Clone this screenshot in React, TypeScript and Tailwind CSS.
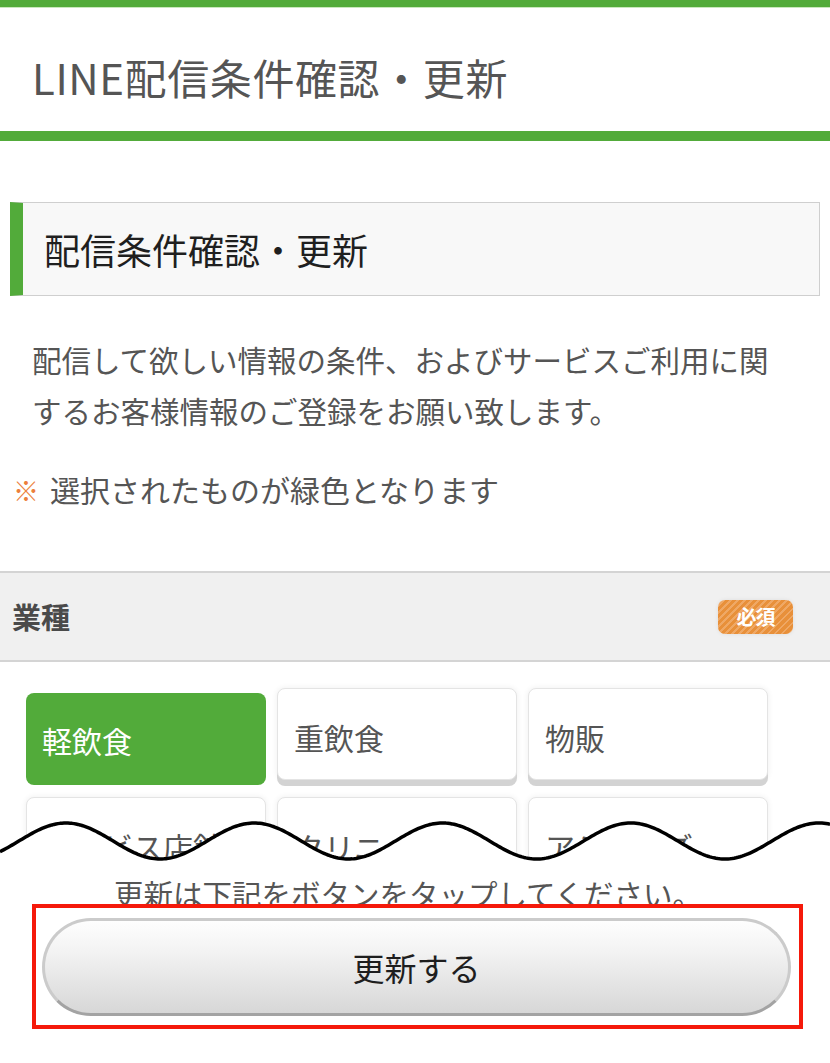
import React from "react";

const wavePath = (() => {
  const pts: string[] = [];
  for (let x = 0; x <= 830; x += 2) {
    const y = 26 - 18 * Math.cos((2 * Math.PI * (x - 66)) / 188.25);
    pts.push(`${x},${y.toFixed(2)}`);
  }
  return pts;
})();

const Card = ({ label, active }: { label: React.ReactNode; active?: boolean }) =>
  active ? (
    <div className="h-[92px] translate-y-[5px] rounded-[8px] bg-[#52ab3a] flex items-center pl-[16px] pt-[2px] text-[30px] text-white overflow-hidden whitespace-nowrap">
      {label}
    </div>
  ) : (
    <div className="h-[92px] rounded-[8px] bg-white border border-[#e4e4e4] shadow-[0_6px_0_#d3d3d3,0_0_6px_rgba(0,0,0,0.07)] flex items-start pl-[16px] pt-[28px] text-[30px] leading-[40px] text-[#555] overflow-hidden">
      <span>{label}</span>
    </div>
  );

export default function App() {
  return (
    <div className="relative w-[830px] h-[1063px] overflow-hidden bg-white font-['Noto_Sans_CJK_JP','Noto_Sans',sans-serif]">
      <div className="h-[8px] bg-[#52ab3a] border-b border-[#c9e8bd]" />
      <div className="h-[123px] flex items-center pl-[32px] pt-[14px] text-[42px] text-[#555] tracking-[0.6px]">
        LINE配信条件確認・更新
      </div>
      <div className="h-[10px] bg-[#52ab3a]" />

      <div className="mt-[61px] mx-[10px] h-[94px] border border-[#cfcfcf] border-l-[13px] border-l-[#52ab3a] bg-[#f8f8f8] flex items-center pl-[21px] text-[36px] text-[#1f1f1f]">
        配信条件確認・更新
      </div>

      <p className="mt-[38px] px-[32px] text-[29.5px] leading-[51px] text-[#555]">
        配信して欲しい情報の条件、およびサービスご利用に関
        <br />
        するお客様情報のご登録をお願い致します。
      </p>

      <div className="mt-[28px] flex items-center h-[51px] text-[30px] text-[#555]">
        <span className="w-[22px] ml-[13px] mr-[15px] text-[26px] text-[#ec7f3c] leading-none">※</span>
        <span>選択されたものが緑色となります</span>
      </div>

      <div className="mt-[56px] h-[91px] bg-[#f0f0f0] border-t-2 border-b-2 border-[#d4d4d4] flex items-center justify-between pl-[12px] pr-[37px]">
        <span className="text-[29px] font-bold text-[#4a4a4a]">業種</span>
        <span className="w-[75px] h-[34px] rounded-[7px] bg-[repeating-linear-gradient(135deg,#e8903a_0px,#e8903a_3px,#efa865_3px,#efa865_5px)] shadow-[0_0_4px_rgba(0,0,0,0.08)] flex items-center justify-center text-white font-bold text-[20px] tracking-[-1px]">
          必須
        </span>
      </div>

      <div className="mt-[26px] pl-[26px] grid grid-cols-[240px_240px_240px] gap-x-[11px] gap-y-[17px]">
        <Card label="軽飲食" active />
        <Card label="重飲食" />
        <Card label="物販" />
        <Card label="サービス店舗" />
        <Card label="クリニック" />
        <Card
          label={
            <>
              アミューズ
              <br />
              メント
            </>
          }
        />
      </div>

      <div className="absolute left-0 right-0 top-[815px] bottom-0 flex flex-col">
        <svg className="block w-[830px] h-[52px]" viewBox="0 0 830 52" overflow="visible">
          <path d={`M${wavePath.join(" L")} L830,53 L0,53 Z`} fill="#fff" />
          <path d={`M${wavePath.join(" L")}`} fill="none" stroke="#000" strokeWidth="3.5" strokeLinejoin="round" />
        </svg>
        <div className="flex-1 bg-white flex flex-col items-center">
          <div className="mt-[12px] h-[28px] leading-[28px] text-[29.5px] text-[#555] pr-[14px]">
            更新は下記をボタンをタップしてください。
          </div>
          <div className="relative -mt-[3px] self-start ml-[32px] w-[771px] h-[125px] border-4 border-[#f5190a] bg-white pt-[10px] pl-[6px] pr-[8px] pb-[9px]">
            <div className="h-full rounded-full border-[3px] border-[#cbcbcb] border-b-[#a3a3a3] bg-[linear-gradient(#fefefe,#f2f2f2_35%,#d7d7d7)] flex items-center justify-center text-[32px] text-[#1e1e1e]">
              更新する
            </div>
          </div>
        </div>
      </div>
    </div>
  );
}
